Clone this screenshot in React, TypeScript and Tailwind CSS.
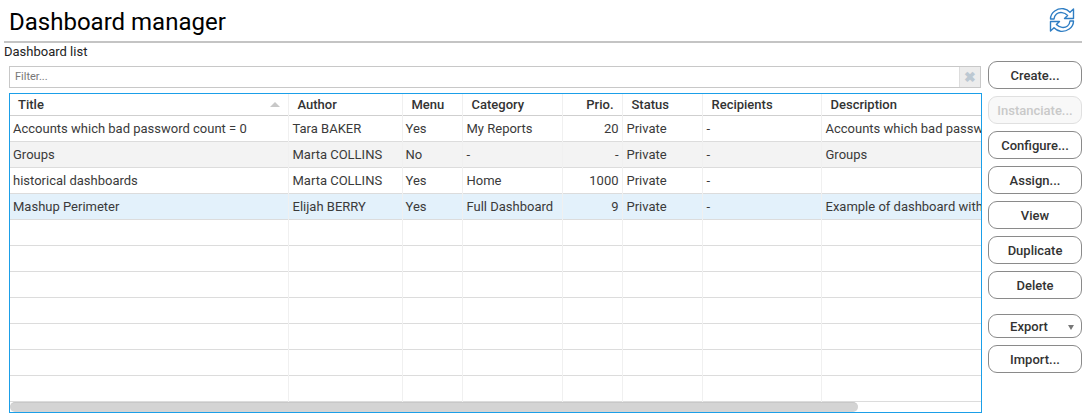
import React from "react";

const cols = [
  { w: 278, label: "Title", cls: "pl-[8px]" },
  { w: 114, label: "Author", cls: "pl-[9px]" },
  { w: 60, label: "Menu", cls: "pl-[9px]" },
  { w: 100, label: "Category", cls: "pl-[9px]" },
  { w: 60, label: "Prio.", cls: "text-right pr-[8px]" },
  { w: 80, label: "Status", cls: "pl-[9px]" },
  { w: 119, label: "Recipients", cls: "pl-[9px]" },
  { w: 160, label: "Description", cls: "pl-[9px]" },
];

const rows = [
  { c: ["Accounts which bad password count = 0", "Tara BAKER", "Yes", "My Reports", "20", "Private", "-", "Accounts which bad password count = 0"], bg: "bg-white" },
  { c: ["Groups", "Marta COLLINS", "No", "-", "-", "Private", "-", "Groups"], bg: "bg-[#f3f3f3]" },
  { c: ["historical dashboards", "Marta COLLINS", "Yes", "Home", "1000", "Private", "-", ""], bg: "bg-white" },
  { c: ["Mashup Perimeter", "Elijah BERRY", "Yes", "Full Dashboard", "9", "Private", "-", "Example of dashboard with perimeter"], bg: "bg-[#e3f1fb]" },
  ...Array.from({ length: 7 }, () => ({ c: ["", "", "", "", "", "", "", ""], bg: "bg-white" })),
];

function Btn({ label, disabled, h = "h-[28px]", mb = "mb-[7px]", caret }: { label: string; disabled?: boolean; h?: string; mb?: string; caret?: boolean }) {
  return (
    <button
      className={`relative w-[94px] ${h} ${mb} rounded-[9px] border pt-[1px] text-[13px] font-medium ${disabled ? "border-[#e0e0e0] bg-[#f8f8f8] text-[#c9c9c9]" : "border-[#8a8a8a] bg-white text-[#333]"}`}
    >
      <span className={caret ? "relative left-[-6px]" : ""}>{label}</span>
      {caret && <span className="absolute right-[7px] top-[10px] h-0 w-0 border-x-[3.5px] border-t-[5px] border-x-transparent border-t-[#777]" />}
    </button>
  );
}

export default function App() {
  return (
    <div className="h-[418px] w-[1091px] overflow-hidden bg-white text-[13px] text-[#333]" style={{ fontFamily: "Roboto, sans-serif" }}>
      <div className="ml-[4px] mr-[9px] flex h-[43px] items-start justify-between border-b-2 border-[#c4c4c4]">
        <h1 className="ml-[5px] mt-[7px] text-[24px] leading-[30px] font-normal text-black">Dashboard manager</h1>
        <svg className="mr-[7px] mt-[7px]" width="26" height="26" viewBox="0 0 26 26" fill="none" stroke="#2f7ec4" strokeWidth="1.4" strokeLinejoin="round">
          <path d="M1.5 12 C1.5 5 8.5 1 14.5 1.7 C17.5 2.2 19.5 3.6 21 5.2 L24.5 2 L24.5 11.5 L15.5 11.5 L18.6 8.4 C15.5 5.2 10.5 4.6 7.5 7 C6 8.3 5.2 10 5 12 Z" />
          <path d="M24.5 14 C24.5 21 17.5 25 11.5 24.3 C8.5 23.8 6.5 22.4 5 20.8 L1.5 24 L1.5 14.5 L10.5 14.5 L7.4 17.6 C10.5 20.8 15.5 21.4 18.5 19 C20 17.7 20.8 16 21 14 Z" />
        </svg>
      </div>
      <div className="ml-[4px] mt-[1px] h-[15px] text-[13px] leading-[15px] text-[#222]">Dashboard list</div>
      <div className="flex">
        <div className="ml-[9px] w-[973px]">
          <div className="mt-[7px] flex h-[22px] w-[972px] border border-[#c8c8c8]">
            <div className="flex-1 pl-[5px] text-[11px] leading-[19px] text-[#777]">Filter...</div>
            <div className="flex w-[21px] items-center justify-center border-l border-[#ddd] bg-[#ececec] text-[14px] leading-none font-bold text-[#bcc8d2]">✖</div>
          </div>
          <div className="relative mt-[5px] h-[320px] w-[973px] overflow-hidden border border-[#1b9fe8]">
            <table className="w-[971px] table-fixed border-collapse">
              <colgroup>
                {cols.map((c, i) => (
                  <col key={i} style={{ width: c.w }} />
                ))}
              </colgroup>
              <thead>
                <tr className="h-[21px] border-b border-[#cfcfcf]">
                  {cols.map((c, i) => (
                    <th key={i} className={`relative border-r border-[#f0f0f0] p-0 pt-[1px] text-left text-[13px] leading-[20px] font-medium whitespace-nowrap text-[#333] ${c.cls}`}>
                      {c.label}
                      {i === 0 && <span className="absolute right-[8px] top-[8px] h-0 w-0 border-x-[5px] border-b-[5px] border-x-transparent border-b-[#c8c8c8]" />}
                    </th>
                  ))}
                </tr>
              </thead>
              <tbody>
                {rows.map((r, ri) => (
                  <tr key={ri} className={`h-[26px] border-b border-[#dcdcdc] ${r.bg}`}>
                    {r.c.map((t, i) => (
                      <td key={i} className={`overflow-hidden border-r border-[#f0f0f0] py-0 pr-[3px] text-[13px] leading-[25px] whitespace-nowrap text-[#3a3a3a] ${i === 4 ? "text-right" : "text-left"} ${i === 0 ? "pl-[3px]" : i === 2 ? "pl-[3px]" : "pl-[4px]"}`}>
                        {t}
                      </td>
                    ))}
                  </tr>
                ))}
              </tbody>
            </table>
            <div className="absolute right-0 bottom-0 left-0 h-[10px] bg-white">
              <div className="h-[10px] w-[848px] rounded-[5px] border-t border-[#c8c8c8] bg-[#d4d4d4]" />
            </div>
          </div>
        </div>
        <div className="ml-[6px] mt-[2px] flex flex-col">
          <Btn label="Create..." />
          <Btn label="Instanciate..." disabled />
          <Btn label="Configure..." />
          <Btn label="Assign..." />
          <Btn label="View" />
          <Btn label="Duplicate" />
          <Btn label="Delete" mb="mb-[15px]" />
          <Btn label="Export" h="h-[24px]" mb="mb-[7px]" caret />
          <Btn label="Import..." />
        </div>
      </div>
    </div>
  );
}
